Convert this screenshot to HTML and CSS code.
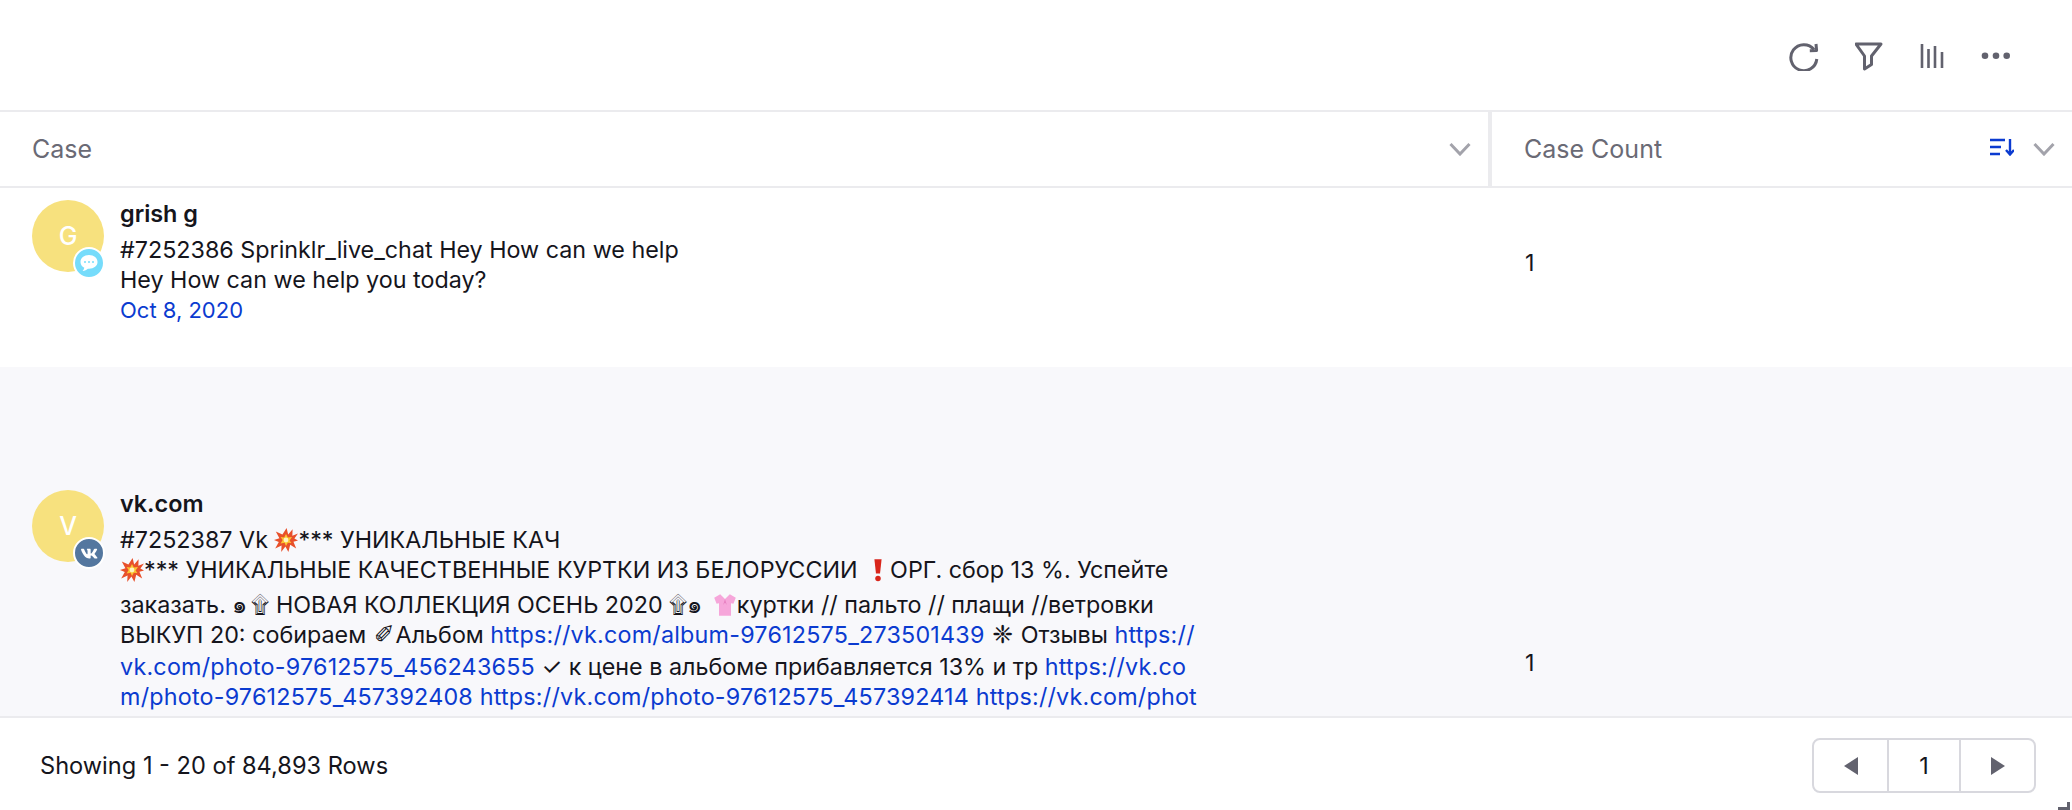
FILE: index.html
```html
<!DOCTYPE html>
<html lang="en">
<head>
<meta charset="utf-8">
<title>Case table</title>
<link rel="stylesheet" href="styles.css">
</head>
<body>
<div class="widget">
  <div class="toolbar">
    <svg class="icon" width="30" height="30" viewBox="0 0 30 30"><path d="M25 8.500A13 13 0 1 0 27.800 18" /><path d="M27 3l.6 6.500-6.800.2" /></svg>
    <svg class="icon" width="28" height="30" viewBox="0 0 28 30"><path d="M1 3h25L16.500 15v8.500L9.500 28V15z" /></svg>
    <svg class="icon thin" width="26" height="30" viewBox="0 0 26 30"><path d="M3 3v24M9.500 8v19M16 5v22M23 11v16" /></svg>
    <svg class="icon dots" width="30" height="30" viewBox="0 0 30 30"><circle cx="4" cy="14.800" r="3.300"/><circle cx="15" cy="14.800" r="3.300"/><circle cx="25.700" cy="14.800" r="3.300"/></svg>
  </div>
  <div class="head">
    <div class="hcell hcase">
      <span>Case</span>
      <svg class="chev" width="22" height="14" viewBox="0 0 22 14"><path d="M1.500 2L11 12l9.500-10"/></svg>
    </div>
    <div class="hcell hcount">
      <span>Case Count</span>
      <span class="hicons">
        <svg class="sort" width="26" height="18" viewBox="0 0 26 18"><path d="M2 2h15M2 9h11M2 16h10M22 1v15M18 12l4 4.500 4-4.500"/></svg>
        <svg class="chev" width="22" height="14" viewBox="0 0 22 14"><path d="M1.500 2L11 12l9.500-10"/></svg>
      </span>
    </div>
  </div>
  <div class="rows">
    <div class="row row1">
      <div class="case">
        <div class="avatar">G
          <span class="badge chat"><svg width="20" height="20" viewBox="0 0 20 20"><path fill="#fff" d="M10 2c-5 0-8.500 3-8.500 7 0 2.500 1.500 4.600 3.800 5.800-.2 1.200-.8 2.300-1.700 3.200 2.300-.2 4-1.200 5.300-2.300h1.100c5 0 8.500-2.800 8.500-6.700S15 2 10 2z"/><circle cx="6" cy="9" r="1" fill="#76dcfb"/><circle cx="10" cy="9" r="1" fill="#76dcfb"/><circle cx="14" cy="9" r="1" fill="#76dcfb"/></svg></span>
        </div>
        <div class="body">
          <div class="name">grish g</div>
          <div class="line">#7252386 Sprinklr_live_chat Hey How can we help</div>
          <div class="line">Hey How can we help you today?</div>
          <div class="line date">Oct 8, 2020</div>
        </div>
      </div>
      <div class="count">1</div>
    </div>
    <div class="row row2">
      <div class="case">
        <div class="avatar">V
          <span class="badge vk"><svg width="17" height="11" viewBox="4 7 16.500 10.500"><path fill="#fff" d="M19.376 17.123h-1.744c-.66 0-.864-.525-2.050-1.727-1.033-1-1.490-1.135-1.744-1.135-.356 0-.458.102-.458.593v1.575c0 .424-.135.678-1.253.678-1.846 0-3.896-1.118-5.335-3.202C4.624 10.857 4.030 8.570 4.030 8.096c0-.254.102-.491.593-.491h1.744c.44 0 .61.203.78.677.863 2.490 2.303 4.675 2.896 4.675.22 0 .322-.102.322-.66V9.721c-.068-1.186-.695-1.287-.695-1.710 0-.204.17-.407.44-.407h2.744c.373 0 .508.203.508.643v3.473c0 .372.17.508.271.508.22 0 .407-.136.813-.542 1.254-1.406 2.151-3.574 2.151-3.574.119-.254.322-.491.763-.491h1.744c.525 0 .644.27.525.643-.22 1.017-2.354 4.031-2.354 4.031-.186.305-.254.44 0 .78.186.254.796.779 1.203 1.253.745.847 1.320 1.558 1.473 2.050.17.490-.085.744-.576.744z"/></svg></span>
        </div>
        <div class="body">
          <div class="name">vk.com</div>
          <div class="line">#7252387 Vk <svg class="emoji" viewBox="0 0 20 20"><path fill="#e8502a" d="M10.500 0l1.300 5.500L15.500 1l-.2 5.500L20 4.500l-3 4.300 3 1.700-3.800.9 2.300 5.600-5-3L12 20l-2.500-4.500L6 20l.3-5.500L1 17l3-5.300-4-1.700 4.500-1.500L1.500 3 7 5.500z"/><path fill="#fbc531" d="M10 5l1.500 3L15 7.500l-2 3 1.500 2-3-.2L10 15l-1.200-2.700L5.500 13l1.700-3L5.500 7.500 8.500 8z"/><circle cx="10" cy="10" r="2" fill="#fff3c0"/></svg>*** УНИКАЛЬНЫЕ КАЧ</div>
          <div class="line"><svg class="emoji" viewBox="0 0 20 20"><path fill="#e8502a" d="M10.500 0l1.300 5.500L15.500 1l-.2 5.500L20 4.500l-3 4.300 3 1.700-3.800.9 2.300 5.600-5-3L12 20l-2.500-4.500L6 20l.3-5.500L1 17l3-5.300-4-1.700 4.500-1.500L1.500 3 7 5.500z"/><path fill="#fbc531" d="M10 5l1.500 3L15 7.500l-2 3 1.500 2-3-.2L10 15l-1.200-2.700L5.500 13l1.700-3L5.500 7.500 8.500 8z"/><circle cx="10" cy="10" r="2" fill="#fff3c0"/></svg>*** УНИКАЛЬНЫЕ КАЧЕСТВЕННЫЕ КУРТКИ ИЗ БЕЛОРУССИИ <svg class="emoji bang" viewBox="0 0 20 20"><path fill="#d9261c" d="M7 1h6l-1.300 12H8.300z"/><circle cx="10" cy="17" r="2.300" fill="#d9261c"/></svg>ОРГ. сбор 13 %. Успейте</div>
          <div class="line tall l3">заказать. <span class="orn">๑۩</span> НОВАЯ КОЛЛЕКЦИЯ ОСЕНЬ 2020 <span class="orn">۩๑</span> <svg class="emoji" viewBox="0 0 20 20"><path fill="#f6a6da" d="M6 1l4 4 4-4 5 3-2 5-2-.5V19H5V8.500L3 9 1 4z"/><path fill="#e77fc0" d="M10 5l-1.500 5L10 8l1.500 2z"/></svg>куртки // пальто // плащи //ветровки</div>
          <div class="line tall">ВЫКУП 20: собираем <span class="sym">✐</span>Альбом <a>https://vk.com/album-97612575_273501439</a> <span class="sym">❈</span> Отзывы <a>https://</a></div>
          <div class="line tall"><a>vk.com/photo-97612575_456243655</a> ✓ к цене в альбоме прибавляется 13% и тр <a>https://vk.co</a></div>
          <div class="line tall l6"><a>m/photo-97612575_457392408 https://vk.com/photo-97612575_457392414 https://vk.com/phot</a></div>
        </div>
      </div>
      <div class="count">1</div>
    </div>
  </div>
  <div class="foot">
    <div class="showing">Showing 1 - 20 of 84,893 Rows</div>
    <div class="pager">
      <div class="pg"><span class="tri left"></span></div>
      <div class="pg num">1</div>
      <div class="pg"><span class="tri right"></span></div>
    </div>
    <svg class="grip" width="12" height="8" viewBox="0 0 12 8"><path d="M9 0h3v8H0V5h9z"/></svg>
  </div>
</div>
</body>
</html>
```
FILE: styles.css
```css
* { box-sizing: border-box; }
html, body { margin: 0; height: 100%; background: #fff; }
body { font-family: Inter, "Noto Sans", "DejaVu Sans", sans-serif; color: #15151c; font-size: 23.3px; overflow: hidden; }
.widget { width: 2072px; height: 810px; display: flex; flex-direction: column; position: relative; }
.toolbar { height: 112px; flex: none; border-bottom: 2px solid #ebebee; display: flex; align-items: flex-start; justify-content: flex-end; gap: 36px; padding: 41px 61px 0 0; }
.icon { fill: none; stroke: #62626e; stroke-width: 3; stroke-linejoin: round; }
.thin { stroke-width: 2.600; }
.dots { fill: #62626e; stroke: none; }
.head { height: 76px; flex: none; display: flex; border-bottom: 2px solid #ebebee; color: #6a6a75; font-size: 25px; }
.hcell { display: flex; align-items: center; justify-content: space-between; }
.hcase { width: 1492px; padding: 0 17px 0 32px; border-right: 4px solid #ebebee; }
.hcount { flex: 1; padding: 0 17px 0 32px; }
.hicons { display: flex; align-items: center; gap: 19px; }
.chev { fill: none; stroke: #a3a3ab; stroke-width: 3; }
.sort { fill: none; stroke: #0b3bd0; stroke-width: 2.400; margin-bottom: 4px; }
.rows { flex: none; height: 528px; overflow: hidden; }
.row { display: flex; }
.row1 { height: 179px; padding-top: 12px; }
.row2 { height: 349px; padding-top: 123px; background: #f8f8fb; }
.case { width: 1525px; padding-left: 32px; display: flex; gap: 16px; }
.avatar { width: 72px; height: 72px; flex: none; border-radius: 50%; background: #f7e17e; color: #fff; font-size: 25px; font-weight: 500; display: flex; align-items: center; justify-content: center; position: relative; }
.badge { position: absolute; left: 41px; top: 47px; width: 32px; height: 32px; border-radius: 50%; border: 2px solid #fff; display: flex; align-items: center; justify-content: center; }
.chat { background: #76dcfb; }
.vk { background: #54779f; }
.body { flex: none; width: 1100px; }
.name { font-weight: 600; font-size: 23.4px; line-height: 28px; margin-bottom: 7px; }
.line { line-height: 30px; white-space: nowrap; }
.tall { line-height: 32px; }
.l3 { margin-top: 4px; margin-bottom: -2px; }
.l6 { margin-top: -2px; }
.date { font-size: 22px; line-height: 31px; }
.date, a { color: #0b3bd0; }
a { letter-spacing: .22px; }
.emoji { width: 24px; height: 24px; vertical-align: -4px; }
.bang { margin-left: 2px; }
.orn { font-family: "DejaVu Sans", sans-serif; font-size: 24px; letter-spacing: 4px; line-height: 0; }
.sym { font-family: "DejaVu Sans", sans-serif; font-size: 25px; line-height: 0; margin: 0 1px; }
.count { padding-top: 49px; line-height: 28px; }
.row2 .count { padding-top: 159px; }
.foot { flex: 1; border-top: 2px solid #ebebee; display: flex; align-items: center; justify-content: space-between; padding: 3px 36px 0 40px; position: relative; }
.showing { font-size: 23.6px; }
.pager { display: flex; width: 224px; height: 55px; border: 2px solid #d8d8de; border-radius: 8px; }
.pg { flex: 1; display: flex; align-items: center; justify-content: center; }
.num { flex: none; width: 74px; border-left: 2px solid #d8d8de; border-right: 2px solid #d8d8de; }
.tri { width: 0; height: 0; border-top: 9px solid transparent; border-bottom: 9px solid transparent; }
.left { border-right: 14px solid #62626e; }
.right { border-left: 14px solid #62626e; }
.grip { position: absolute; right: 2px; bottom: 0; fill: #62626e; }
```
